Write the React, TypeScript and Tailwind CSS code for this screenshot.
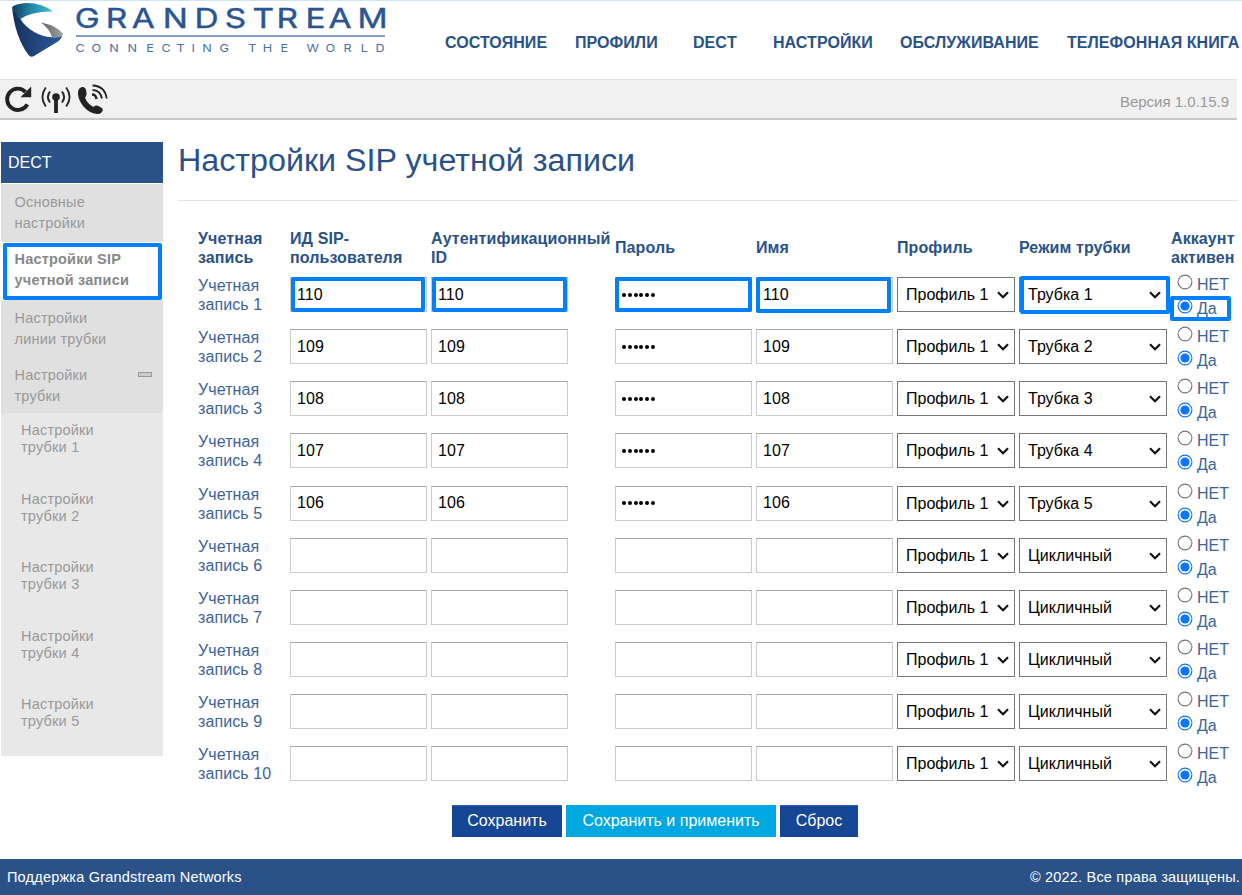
import React from "react";

const NAV = [
  { label: "СОСТОЯНИЕ", cls: "w-[130px]" },
  { label: "ПРОФИЛИ", cls: "w-[118px]" },
  { label: "DECT", cls: "w-[80px]" },
  { label: "НАСТРОЙКИ", cls: "w-[127px]" },
  { label: "ОБСЛУЖИВАНИЕ", cls: "w-[167px]" },
  { label: "ТЕЛЕФОННАЯ КНИГА", cls: "w-[174px]" },
];

const ACCOUNTS = [
  { user: "110", mode: "Трубка 1" },
  { user: "109", mode: "Трубка 2" },
  { user: "108", mode: "Трубка 3" },
  { user: "107", mode: "Трубка 4" },
  { user: "106", mode: "Трубка 5" },
  { user: "", mode: "Цикличный" },
  { user: "", mode: "Цикличный" },
  { user: "", mode: "Цикличный" },
  { user: "", mode: "Цикличный" },
  { user: "", mode: "Цикличный" },
];

const COLS =
  "grid grid-cols-[92px_141px_184px_141px_141px_122px_152px_70px]";

function Logo() {
  return (
    <svg width="376" height="60" viewBox="0 0 376 60" className="ml-3 block">
      <defs>
        <linearGradient id="teal" x1="0" x2="1">
          <stop offset="0" stopColor="#123c5e" />
          <stop offset="0.45" stopColor="#2184a6" />
          <stop offset="1" stopColor="#48bdd6" />
        </linearGradient>
        <linearGradient id="navy" x1="0" x2="1">
          <stop offset="0" stopColor="#14305a" />
          <stop offset="0.5" stopColor="#22467e" />
          <stop offset="1" stopColor="#2c5a96" />
        </linearGradient>
        <linearGradient id="steel" x1="0" x2="1">
          <stop offset="0" stopColor="#5c5f62" />
          <stop offset="1" stopColor="#a3a5a8" />
        </linearGradient>
      </defs>
      <path d="M0 6L8.500 18C14 28 28 36 40 36.300Q47 36.500 50.500 34.500Q49 38.500 46 40.500L22 55Q19 56.800 16.500 54Q3 36 0 6Z" fill="url(#navy)" />
      <path d="M0 6Q3 3 13 2Q30 1.500 41 10.500Q20 10 8.500 18Q3 12 0 6Z" fill="url(#teal)" />
      <path d="M29 21.500Q46 25 51 33Q50 36.300 42 36.500L40 36.300Q37 27 29 21.500Z" fill="url(#steel)" />
      <text
        transform="scale(1.26 1)"
        x="49.900 74.500 95.100 119.600 144.900 168.900 190.900 210 233 251.100 274.200"
        y="27"
        fontFamily="Inter, sans-serif"
        fontSize="26.500"
        fill="#2a5590"
        stroke="#2a5590"
        strokeWidth="0.400"
      >
        GRANDSTREAM
      </text>
      <rect x="64" y="34.300" width="309" height="1.500" fill="#5c7fae" />
      <text
        transform="scale(1.15 1)"
        x="55.300 69.200 84.500 100.500 116.800 130 143 156 165.500 180.500 195 205.500 218 233.500 245 256.200 272.700 288.200 303.200 316"
        y="51"
        fontFamily="Inter, sans-serif"
        fontSize="11"
        fill="#4a71a5"
      >
        CONNECTING THE WORLD
      </text>
    </svg>
  );
}

function ReloadIcon() {
  return (
    <svg width="28" height="28" viewBox="0 0 28 28">
      <path d="M21.500 6.800A10.700 10.700 0 1 0 23.300 19.300" fill="none" stroke="#222" strokeWidth="3.900" />
      <path d="M27.200 1.500V12.300H16.500Z" fill="#222" />
    </svg>
  );
}

function AntennaIcon() {
  return (
    <svg width="30" height="28" viewBox="0 0 30 28" fill="none" stroke="#222">
      <circle cx="15" cy="12" r="3.800" fill="#222" stroke="none" />
      <path d="M15 12V28.500" strokeWidth="3.800" />
      <path d="M9 6.500Q4.800 12 9 17.500M21 6.500Q25.200 12 21 17.500" strokeWidth="2" />
      <path d="M4.800 2.500Q-2 12 4.800 21.500M25.200 2.500Q32 12 25.200 21.500" strokeWidth="1.800" />
    </svg>
  );
}

function CallIcon() {
  return (
    <svg width="30" height="30" viewBox="0 0 30 30" fill="none" stroke="#222">
      <path d="M0 8Q0.500 4 4 3Q7.500 2.500 8.200 7Q9.300 12 7 13.500Q8.500 19 15.500 23Q17.500 20.800 20.500 22L24.500 24.500Q25.500 28 21 30Q12.500 30.500 5.500 22.500Q-0.500 15 0 8Z" fill="#222" stroke="none" />
      <path d="M14 10.500Q18 10.500 18.500 15" strokeWidth="2.400" />
      <path d="M14.500 6Q22.500 6.300 24 14.500" strokeWidth="1.800" />
      <path d="M14.500 1.500Q27 2 28.700 14.500" strokeWidth="1.800" />
    </svg>
  );
}

function Field({ value, mask }: { value: string; mask?: boolean }) {
  return (
    <div className="flex h-[35px] w-[137px] items-center border border-[#ccc] border-t-[#aaa] bg-white pl-1.5 text-[16px] tracking-[0.1px] text-black">
      {mask && value ? (
        <div className="flex gap-[1.8px]">
          {[0, 1, 2, 3, 4, 5].map((n) => (
            <span key={n} className="size-1 rounded-full bg-black" />
          ))}
        </div>
      ) : (
        value
      )}
    </div>
  );
}

function Select({ value, wide }: { value: string; wide?: boolean }) {
  return (
    <div
      className={
        (wide ? "w-[148px]" : "w-[118px]") +
        " flex h-[35px] items-center justify-between border border-[#767676] bg-white pt-px pl-2 pr-[5px] text-[16px] whitespace-nowrap text-black"
      }
    >
      {value}
      <svg width="12" height="8" viewBox="0 0 12 8" className="shrink-0">
        <path d="M1 1.200L6 6.200L11 1.200" fill="none" stroke="#111" strokeWidth="2.200" />
      </svg>
    </div>
  );
}

function Radio({ on }: { on?: boolean }) {
  return (
    <svg width="16" height="16" viewBox="0 0 16 16" className="shrink-0">
      <circle cx="8" cy="8" r="6.900" fill="#fff" stroke={on ? "#0a75ff" : "#767676"} strokeWidth="1.100" />
      {on && <circle cx="8" cy="8" r="4.600" fill="#0a75ff" />}
    </svg>
  );
}

function Ring({ cls }: { cls: string }) {
  return <div className={"pointer-events-none absolute rounded-[2px] border-4 border-[#0080ff] " + cls} />;
}

export default function App() {
  return (
    <div className="flex h-[895px] w-[1242px] flex-col overflow-hidden bg-white font-['Liberation_Sans',Arial,sans-serif] text-[#2a5288]">
      <header className="flex h-[79px] shrink-0 border-t border-[#d5e2f2]">
        <Logo />
        <nav className="flex pt-[31px] pl-[57px] text-[16px] leading-[21px] font-bold tracking-[0.06px]">
          {NAV.map((n) => (
            <span key={n.label} className={"shrink-0 whitespace-nowrap " + n.cls}>
              {n.label}
            </span>
          ))}
        </nav>
      </header>

      <div className="flex h-[41px] w-[1237px] shrink-0 items-center justify-between border-t border-b-2 border-t-[#e4e4e4] border-b-[#c8c8c8] bg-[#f1f1f1] pr-2 pl-1">
        <div className="flex items-center">
          <ReloadIcon />
          <div className="mr-[7px] ml-[9px]">
            <AntennaIcon />
          </div>
          <CallIcon />
        </div>
        <span className="pt-1.5 text-[15px] text-[#999]">Версия 1.0.15.9</span>
      </div>

      <div className="flex h-[739px] shrink-0 pt-[22px]">
        <aside className="ml-px flex w-[162px] shrink-0 flex-col text-[14.500px] tracking-[0.2px] text-[#999]">
          <div className="flex h-[41px] items-center bg-[#2a5288] pt-px pl-[7px] text-[16px] tracking-normal text-white">DECT</div>
          <div className="mt-px h-[58px] bg-[#e0e0e0] pt-2 pl-[13.500px] leading-[21px]">
            Основные
            <br />
            настройки
          </div>
          <div className="relative h-[58px] bg-white pt-[7px] pl-[13.500px] leading-[21px] font-bold text-[#888]">
            Настройки SIP
            <br />
            учетной записи
            <Ring cls="left-[2px] top-px h-[57px] w-[159px]" />
          </div>
          <div className="h-[56px] bg-[#e0e0e0] pt-2 pl-[13.500px] leading-[21px]">
            Настройки
            <br />
            линии трубки
          </div>
          <div className="flex h-[57px] justify-between bg-[#e0e0e0] pt-[9px] pr-[11px] pl-[13.500px] leading-[21px]">
            <span>
              Настройки
              <br />
              трубки
            </span>
            <span className="mt-[7px] h-[5px] w-[14px] border border-[#999] bg-[#ccc]" />
          </div>
          <div className="h-[343px] bg-[#e8e8e8] pt-[9px] pl-5 leading-[17px]">
            {[1, 2, 3, 4, 5].map((n) => (
              <div key={n} className="h-[68.600px]">
                Настройки
                <br />
                трубки {n}
              </div>
            ))}
          </div>
        </aside>

        <main className="ml-[15px] w-[1060px] shrink-0">
          <h1 className="h-[59px] border-b border-[#e5e5e5] text-[32.250px] leading-[36px]">Настройки SIP учетной записи</h1>
          <div className={COLS + " ml-5 mt-[26px] h-[40px] items-center text-[16px] leading-[19px] font-bold tracking-[0.1px] whitespace-nowrap"}>
            <span className="pt-px">Учетная<br />запись</span>
            <span className="pt-px">ИД SIP-<br />пользователя</span>
            <span className="pt-px">Аутентификационный<br />ID</span>
            <span>Пароль</span>
            <span>Имя</span>
            <span>Профиль</span>
            <span>Режим трубки</span>
            <span className="pt-px">Аккаунт<br />активен</span>
          </div>
          <div className="relative mt-[3px] ml-5">
            {ACCOUNTS.map((a, i) => (
              <div key={i} className={COLS + " h-[52.170px]"}>
                <div className="pt-1.5 text-[16px] leading-[19px] tracking-[0.1px] whitespace-nowrap text-[#3d6496]">
                  Учетная
                  <br />
                  запись {i + 1}
                </div>
                <div className="pt-[7px]"><Field value={a.user} /></div>
                <div className="pt-[7px]"><Field value={a.user} /></div>
                <div className="pt-[7px]"><Field value={a.user} mask /></div>
                <div className="pt-[7px]"><Field value={a.user} /></div>
                <div className="pt-[7px]"><Select value="Профиль 1" /></div>
                <div className="pt-[7px]"><Select value={a.mode} wide /></div>
                <div className="pt-1 pl-1.5 text-[16px] leading-5 text-[#3d6496]">
                  <div className="flex h-6 gap-1"><Radio /><span className="pt-[1px]">НЕТ</span></div>
                  <div className="flex h-6 gap-1"><Radio on /><span className="pt-[1px]">Да</span></div>
                </div>
              </div>
            ))}
            <Ring cls="left-[93px] top-[7px] h-[35px] w-[134px]" />
            <Ring cls="left-[234px] top-[7px] h-[35px] w-[135px]" />
            <Ring cls="left-[417px] top-[7px] h-[35px] w-[137px]" />
            <Ring cls="left-[558px] top-[7px] h-[36px] w-[135px]" />
            <Ring cls="left-[822px] top-[6px] h-[38px] w-[150px]" />
            <Ring cls="left-[972px] top-[26px] h-[25px] w-[61px]" />
          </div>
          <div className="mt-[13px] ml-[274px] flex gap-1 text-[16px] text-white">
            <button className="h-8 w-[110px] border-t border-[#2466c8] bg-[#174694]">Сохранить</button>
            <button className="h-8 w-[210px] bg-[#00a8e1]">Сохранить и применить</button>
            <button className="h-8 w-[78px] border-t border-[#2466c8] bg-[#174694]">Сброс</button>
          </div>
        </main>
      </div>

      <footer className="flex h-9 shrink-0 items-center justify-between bg-[#2a5288] pt-0.5 pr-0.5 pl-[7px] text-[14.500px] tracking-[0.2px] text-white">
        <span>Поддержка Grandstream Networks</span>
        <span>© 2022. Все права защищены.</span>
      </footer>
    </div>
  );
}
